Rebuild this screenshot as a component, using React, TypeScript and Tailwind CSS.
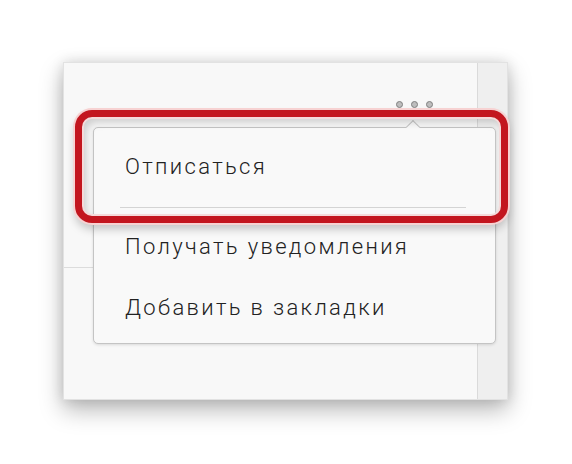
import React from 'react';

const items = ['Получать уведомления', 'Добавить в закладки'];

const App: React.FC = () => {
  return (
    <div className="w-[572px] h-[464px] bg-white pt-[62px] pl-[63px] font-['Roboto',sans-serif]">
      <div className="relative w-[445px] h-[338px] flex bg-[#f8f8f8] border border-[#e2e2e2] shadow-[0_10px_22px_rgba(0,0,0,0.28),0_0_12px_rgba(0,0,0,0.12)]">
        {/* post area */}
        <div className="relative flex-1">
          <div className="absolute left-[332px] top-[38px] flex gap-[8px]">
            <span className="w-[7px] h-[7px] rounded-full border-[1.5px] border-[#808080] bg-[#bdbdbd]" />
            <span className="w-[7px] h-[7px] rounded-full border-[1.5px] border-[#808080] bg-[#bdbdbd]" />
            <span className="w-[7px] h-[7px] rounded-full border-[1.5px] border-[#808080] bg-[#bdbdbd]" />
          </div>
          <div className="mt-[204px] w-[30px] h-px bg-[#dcdcdc]" />
        </div>
        {/* right strip */}
        <div className="w-[30px] bg-[#efefef] border-l border-[#dadada]" />

        {/* dropdown menu */}
        <div className="absolute left-[29px] top-[64px] w-[403px] h-[217px] bg-[#f9f9f9] border border-[#c4c4c4] rounded-[5px] shadow-[0_1px_3px_rgba(0,0,0,0.12)] text-[22px] leading-[26px] font-light tracking-[2.35px] text-[#222]">
          <div className="absolute left-[314px] top-[-6px] w-[10px] h-[10px] rotate-45 bg-[#f9f9f9] border-l border-t border-[#c4c4c4]" />
          <div className="pl-[31px] pt-[26px]">Отписаться</div>
          <div className="mt-[27px] ml-[26px] mr-[29px] h-px bg-[#d4d4d4]" />
          <div className="flex flex-col gap-[35px] pl-[31px] pt-[26px]">
            {items.map((t) => (
              <div key={t}>{t}</div>
            ))}
          </div>
        </div>

        {/* red highlight */}
        <div className="absolute left-[11px] top-[47px] w-[433px] h-[113px] rounded-[17px] border-[7px] border-[#c3161f] shadow-[0_0_0_2px_#f7d2d2,0_6px_10px_rgba(0,0,0,0.22),inset_0_0_0_2px_#f5dada,inset_4px_5px_8px_rgba(0,0,0,0.18)]" />
      </div>
    </div>
  );
};

export default App;
